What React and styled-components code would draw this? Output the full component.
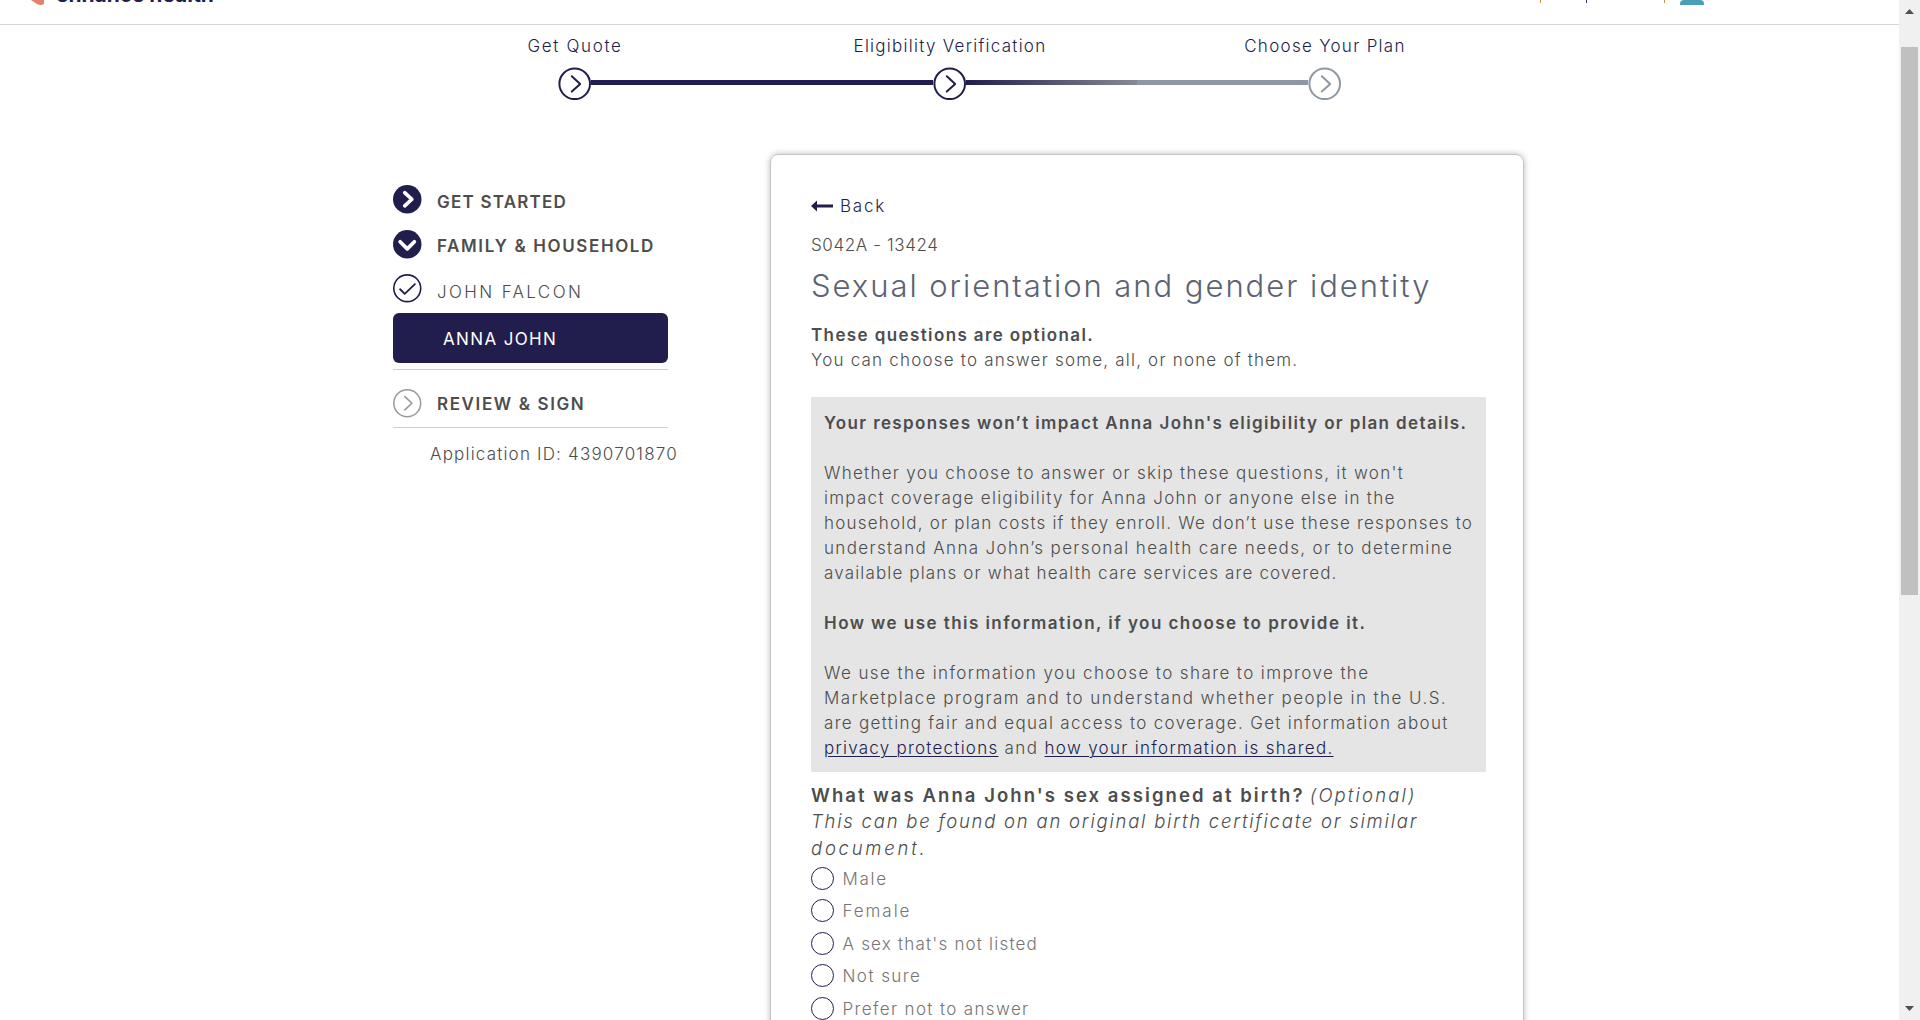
import React from 'react';
import styled, { createGlobalStyle } from 'styled-components';

const NAVY = '#211e4d';
const GREY = '#8e98a4';

const GlobalStyle = createGlobalStyle`
  * { box-sizing: border-box; }
  body {
    margin: 0;
    overflow: hidden;
    background: #fff;
    color: #4d4d4d;
    font-family: Inter, "Liberation Sans", sans-serif;
    font-size: 17px;
    font-weight: 300;
    line-height: 25px;
  }
`;

const Window = styled.div`
  display: flex;
  width: 1920px;
  height: 1020px;
  overflow: hidden;
`;

const Page = styled.div`
  flex: 1;
  min-width: 0;
  overflow: hidden;
`;

const Header = styled.header`
  display: flex;
  align-items: flex-start;
  height: 25px;
  padding-left: 31px;
  border-bottom: 1px solid #d6d6d6;
`;

const LogoMark = styled.svg`
  display: block;
  flex: none;
  width: 15px;
  height: 5px;
  margin-right: 10px;
`;

const Brand = styled.span`
  width: 170px;
  margin-top: -18.5px;
  color: ${NAVY};
  font-size: 21px;
  font-weight: 700;
  line-height: 26px;
  letter-spacing: -0.05px;
  white-space: nowrap;
`;

const HeaderTools = styled.div`
  display: flex;
  align-items: flex-start;
  margin-left: 1314px;
`;

const Tick = styled.i`
  width: 1px;
  height: 3px;
  margin-right: ${p => p.$gap}px;
  background: ${p => p.$color};
`;

const Avatar = styled.i`
  width: 24px;
  height: 5px;
  background: #4a9fb8;
  border-radius: 4px 4px 0 0;
`;

const Stepper = styled.nav`
  display: flex;
  width: 1125px;
  margin: 9px 0 0 387px;
`;

const Step = styled.div`
  display: flex;
  flex-direction: column;
  flex: 1;
  align-items: center;
`;

const StepLabel = styled.span`
  height: 33px;
  padding-left: 1px;
  color: ${NAVY};
  letter-spacing: ${p => p.$ls}px;
  white-space: nowrap;
`;

const StepTrack = styled.div`
  display: flex;
  align-items: center;
  width: 100%;
  height: 33px;
`;

const Bar = styled.span`
  flex: 1;
  height: 5px;
  margin-top: -2px;
  background: ${p => p.$fill};
`;

const StepIcon = styled.svg`
  display: block;
  flex: none;
  width: 33px;
  height: 33px;
  fill: none;
  stroke: ${p => p.$color};
  stroke-width: 2;
  stroke-linecap: round;
  stroke-linejoin: round;
`;

const Main = styled.main`
  display: flex;
  align-items: flex-start;
  gap: 102px;
  padding: 54px 0 0 393px;
`;

const Sidebar = styled.aside`
  width: 275px;
  padding-top: 31px;
`;

const NavRow = styled.div`
  display: flex;
  align-items: flex-start;
  gap: 15.5px;
  height: ${p => p.$h}px;
`;

const NavIcon = styled.svg`
  display: block;
  flex: none;
  width: 28.5px;
  height: 28.5px;
  fill: none;
  stroke-linecap: round;
  stroke-linejoin: round;
`;

const NavLabel = styled.span`
  margin-top: ${p => p.$drop}px;
  font-weight: ${p => (p.$bold ? 600 : 300)};
  line-height: 28px;
  letter-spacing: ${p => p.$ls}px;
  white-space: nowrap;
`;

const ActiveItem = styled.div`
  height: 50px;
  padding-left: 50px;
  border-radius: 6px;
  background: ${NAVY};
  color: #fff;
  font-weight: 400;
  line-height: 53px;
  letter-spacing: 1.36px;
`;

const Divider = styled.hr`
  height: 1px;
  margin: ${p => p.$m};
  border: 0;
  background: #cfcfcf;
`;

const ApplicationId = styled.div`
  padding: 14px 0 0 37px;
  letter-spacing: 1.19px;
  white-space: nowrap;
`;

const Card = styled.section`
  width: 754px;
  height: 1000px;
  padding: 39px 37px 0 40px;
  border: 1px solid #c4c4c4;
  border-radius: 8px;
  box-shadow: 0 0 6px rgba(0, 0, 0, 0.28);
`;

const BackLink = styled.div`
  display: flex;
  align-items: center;
  gap: 7px;
  height: 25px;
  color: ${NAVY};
  letter-spacing: 1.75px;
`;

const Arrow = styled.svg`
  display: block;
  width: 22px;
  height: 12px;
  margin-top: -1px;
  fill: ${NAVY};
`;

const ScreenCode = styled.div`
  margin-top: 14px;
  letter-spacing: 0.62px;
`;

const Title = styled.h1`
  margin: 3px 0 0;
  color: #5b6373;
  font-size: 31px;
  font-weight: 300;
  line-height: 50px;
  letter-spacing: 1.96px;
  white-space: nowrap;
`;

const Intro = styled.div`
  margin-top: 12px;
`;

const Line = styled.div`
  height: 25px;
  font-weight: ${p => (p.$bold ? 600 : 'inherit')};
  letter-spacing: ${p => p.$ls}px;
  white-space: nowrap;
`;

const Notice = styled.div`
  height: 375px;
  margin-top: 24px;
  padding: 14px 12px 11px 13px;
  background: #e5e5e5;
`;

const Spacer = styled.div`
  height: 25px;
`;

const Link = styled.a`
  color: ${NAVY};
  letter-spacing: ${p => p.$ls}px;
  text-decoration: underline;
  text-decoration-thickness: 1px;
  text-underline-offset: 2px;
`;

const Question = styled.div`
  margin-top: 9.75px;
  font-size: 18.5px;
  line-height: 26.5px;
  white-space: nowrap;
`;

const QuestionText = styled.strong`
  font-weight: 600;
  letter-spacing: 2.06px;
`;

const Hint = styled.em`
  letter-spacing: ${p => p.$ls}px;
`;

const Options = styled.div`
  padding-top: 0.75px;
`;

const Option = styled.label`
  display: flex;
  align-items: center;
  gap: 8.5px;
  height: 32.5px;
  color: #757575;
  letter-spacing: ${p => p.$ls}px;
  white-space: nowrap;
`;

const OptionText = styled.span`
  padding-top: 2px;
`;

const Radio = styled.span`
  flex: none;
  width: 23px;
  height: 23px;
  border: 1px solid ${NAVY};
  border-radius: 50%;
`;

const Scrollbar = styled.div`
  display: flex;
  flex-direction: column;
  align-items: center;
  width: 21px;
  height: 1020px;
  padding: 9px 0;
  background: #f0f0f0;
`;

const ScrollArrow = styled.svg`
  display: block;
  width: 9px;
  height: 5px;
  fill: #505050;
`;

const Thumb = styled.div`
  width: 17px;
  height: 548px;
  margin: 33px 0 auto;
  background: #c0c0c0;
`;

const steps = [
  { label: 'Get Quote', ls: 1.65, color: NAVY, left: 'transparent', right: NAVY },
  { label: 'Eligibility Verification', ls: 1.26, color: NAVY, left: NAVY, right: `linear-gradient(90deg, ${NAVY}, #848b95)` },
  { label: 'Choose Your Plan', ls: 1.29, color: GREY, left: GREY, right: 'transparent' },
];

const options = [
  ['Male', 1.7],
  ['Female', 1.95],
  ["A sex that's not listed", 1.2],
  ['Not sure', 1.45],
  ['Prefer not to answer', 1.36],
];

export default function App() {
  return (
    <>
      <GlobalStyle />
      <Window>
        <Page>
          <Header>
            <LogoMark viewBox="0 0 15 5">
              <path d="M0 0H13V4Q10 6 6 4Q3 2 0 0Z" fill="#e4816c" />
            </LogoMark>
            <Brand>enhance health</Brand>
            <HeaderTools>
              <Tick $gap={45} $color="#c98f52" />
              <Tick $gap={77} $color="#4b2d5c" />
              <Tick $gap={15} $color="#c98f52" />
              <Avatar />
            </HeaderTools>
          </Header>
          <Stepper>
            {steps.map(s => (
              <Step key={s.label}>
                <StepLabel $ls={s.ls}>{s.label}</StepLabel>
                <StepTrack>
                  <Bar $fill={s.left} />
                  <StepIcon $color={s.color} viewBox="0 0 33 33">
                    <circle cx="16.7" cy="16.8" r="15.3" />
                    <path d="M13.8 9.2L22.2 16.9L13.8 24.6" />
                  </StepIcon>
                  <Bar $fill={s.right} />
                </StepTrack>
              </Step>
            ))}
          </Stepper>
          <Main>
            <Sidebar>
              <NavRow $h={45}>
                <NavIcon viewBox="0 0 28 28">
                  <circle cx="14" cy="14" r="14" fill={NAVY} />
                  <path d="M11.5 7.5L18.5 14L11.5 20.5" stroke="#fff" strokeWidth="3.6" />
                </NavIcon>
                <NavLabel $bold $drop={3} $ls={1.22}>GET STARTED</NavLabel>
              </NavRow>
              <NavRow $h={44}>
                <NavIcon viewBox="0 0 28 28">
                  <circle cx="14" cy="14" r="14" fill={NAVY} />
                  <path d="M7 11.5L14 18.5L21 11.5" stroke="#fff" strokeWidth="3.6" />
                </NavIcon>
                <NavLabel $bold $drop={2} $ls={1.62}>FAMILY &amp; HOUSEHOLD</NavLabel>
              </NavRow>
              <NavRow $h={39}>
                <NavIcon viewBox="0 0 28 28">
                  <circle cx="14" cy="14" r="13.2" stroke={NAVY} strokeWidth="1.6" />
                  <path d="M7 15L11.5 19.5L21.5 10" stroke={NAVY} strokeWidth="1.8" />
                </NavIcon>
                <NavLabel $drop={4} $ls={2.38}>JOHN FALCON</NavLabel>
              </NavRow>
              <ActiveItem>ANNA JOHN</ActiveItem>
              <Divider $m="6px 0 19px" />
              <NavRow $h={38}>
                <NavIcon viewBox="0 0 28 28">
                  <circle cx="14" cy="14" r="13.2" stroke="#999" strokeWidth="1.5" />
                  <path d="M11.7 7.5L18.5 14L11.7 20.5" stroke="#999" strokeWidth="1.6" />
                </NavIcon>
                <NavLabel $bold $drop={1} $ls={1.62}>REVIEW &amp; SIGN</NavLabel>
              </NavRow>
              <Divider $m="0" />
              <ApplicationId>Application ID: 4390701870</ApplicationId>
            </Sidebar>
            <Card>
              <BackLink>
                <Arrow viewBox="0 0 22 12">
                  <path d="M0 6L6 0.5V4.6H22V7.4H6V11.5Z" />
                </Arrow>
                Back
              </BackLink>
              <ScreenCode>S042A - 13424</ScreenCode>
              <Title>Sexual orientation and gender identity</Title>
              <Intro>
                <Line $bold $ls={1.39}>These questions are optional.</Line>
                <Line $ls={1.2}>You can choose to answer some, all, or none of them.</Line>
              </Intro>
              <Notice>
                <Line $bold $ls={1.38}>Your responses won’t impact Anna John's eligibility or plan details.</Line>
                <Spacer />
                <Line $ls={1.27}>Whether you choose to answer or skip these questions, it won't</Line>
                <Line $ls={1.27}>impact coverage eligibility for Anna John or anyone else in the</Line>
                <Line $ls={1.19}>household, or plan costs if they enroll. We don’t use these responses to</Line>
                <Line $ls={1.34}>understand Anna John’s personal health care needs, or to determine</Line>
                <Line $ls={1.15}>available plans or what health care services are covered.</Line>
                <Spacer />
                <Line $bold $ls={1.45}>How we use this information, if you choose to provide it.</Line>
                <Spacer />
                <Line $ls={1.4}>We use the information you choose to share to improve the</Line>
                <Line $ls={1.43}>Marketplace program and to understand whether people in the U.S.</Line>
                <Line $ls={1.31}>are getting fair and equal access to coverage. Get information about</Line>
                <Line $ls={1.4}>
                  <Link $ls={1.24}>privacy protections</Link> and <Link $ls={1.3}>how your information is shared.</Link>
                </Line>
              </Notice>
              <Question>
                <QuestionText>What was Anna John's sex assigned at birth?</QuestionText>{' '}
                <Hint $ls={2.15}>(Optional)</Hint>
                <br />
                <Hint $ls={1.77}>This can be found on an original birth certificate or similar</Hint>
                <br />
                <Hint $ls={2.75}>document.</Hint>
              </Question>
              <Options>
                {options.map(([label, ls]) => (
                  <Option key={label} $ls={ls}>
                    <Radio />
                    <OptionText>{label}</OptionText>
                  </Option>
                ))}
              </Options>
            </Card>
          </Main>
        </Page>
        <Scrollbar>
          <ScrollArrow viewBox="0 0 9 5"><path d="M0 5L4.5 0L9 5Z" /></ScrollArrow>
          <Thumb />
          <ScrollArrow viewBox="0 0 9 5"><path d="M0 0L4.5 5L9 0Z" /></ScrollArrow>
        </Scrollbar>
      </Window>
    </>
  );
}
